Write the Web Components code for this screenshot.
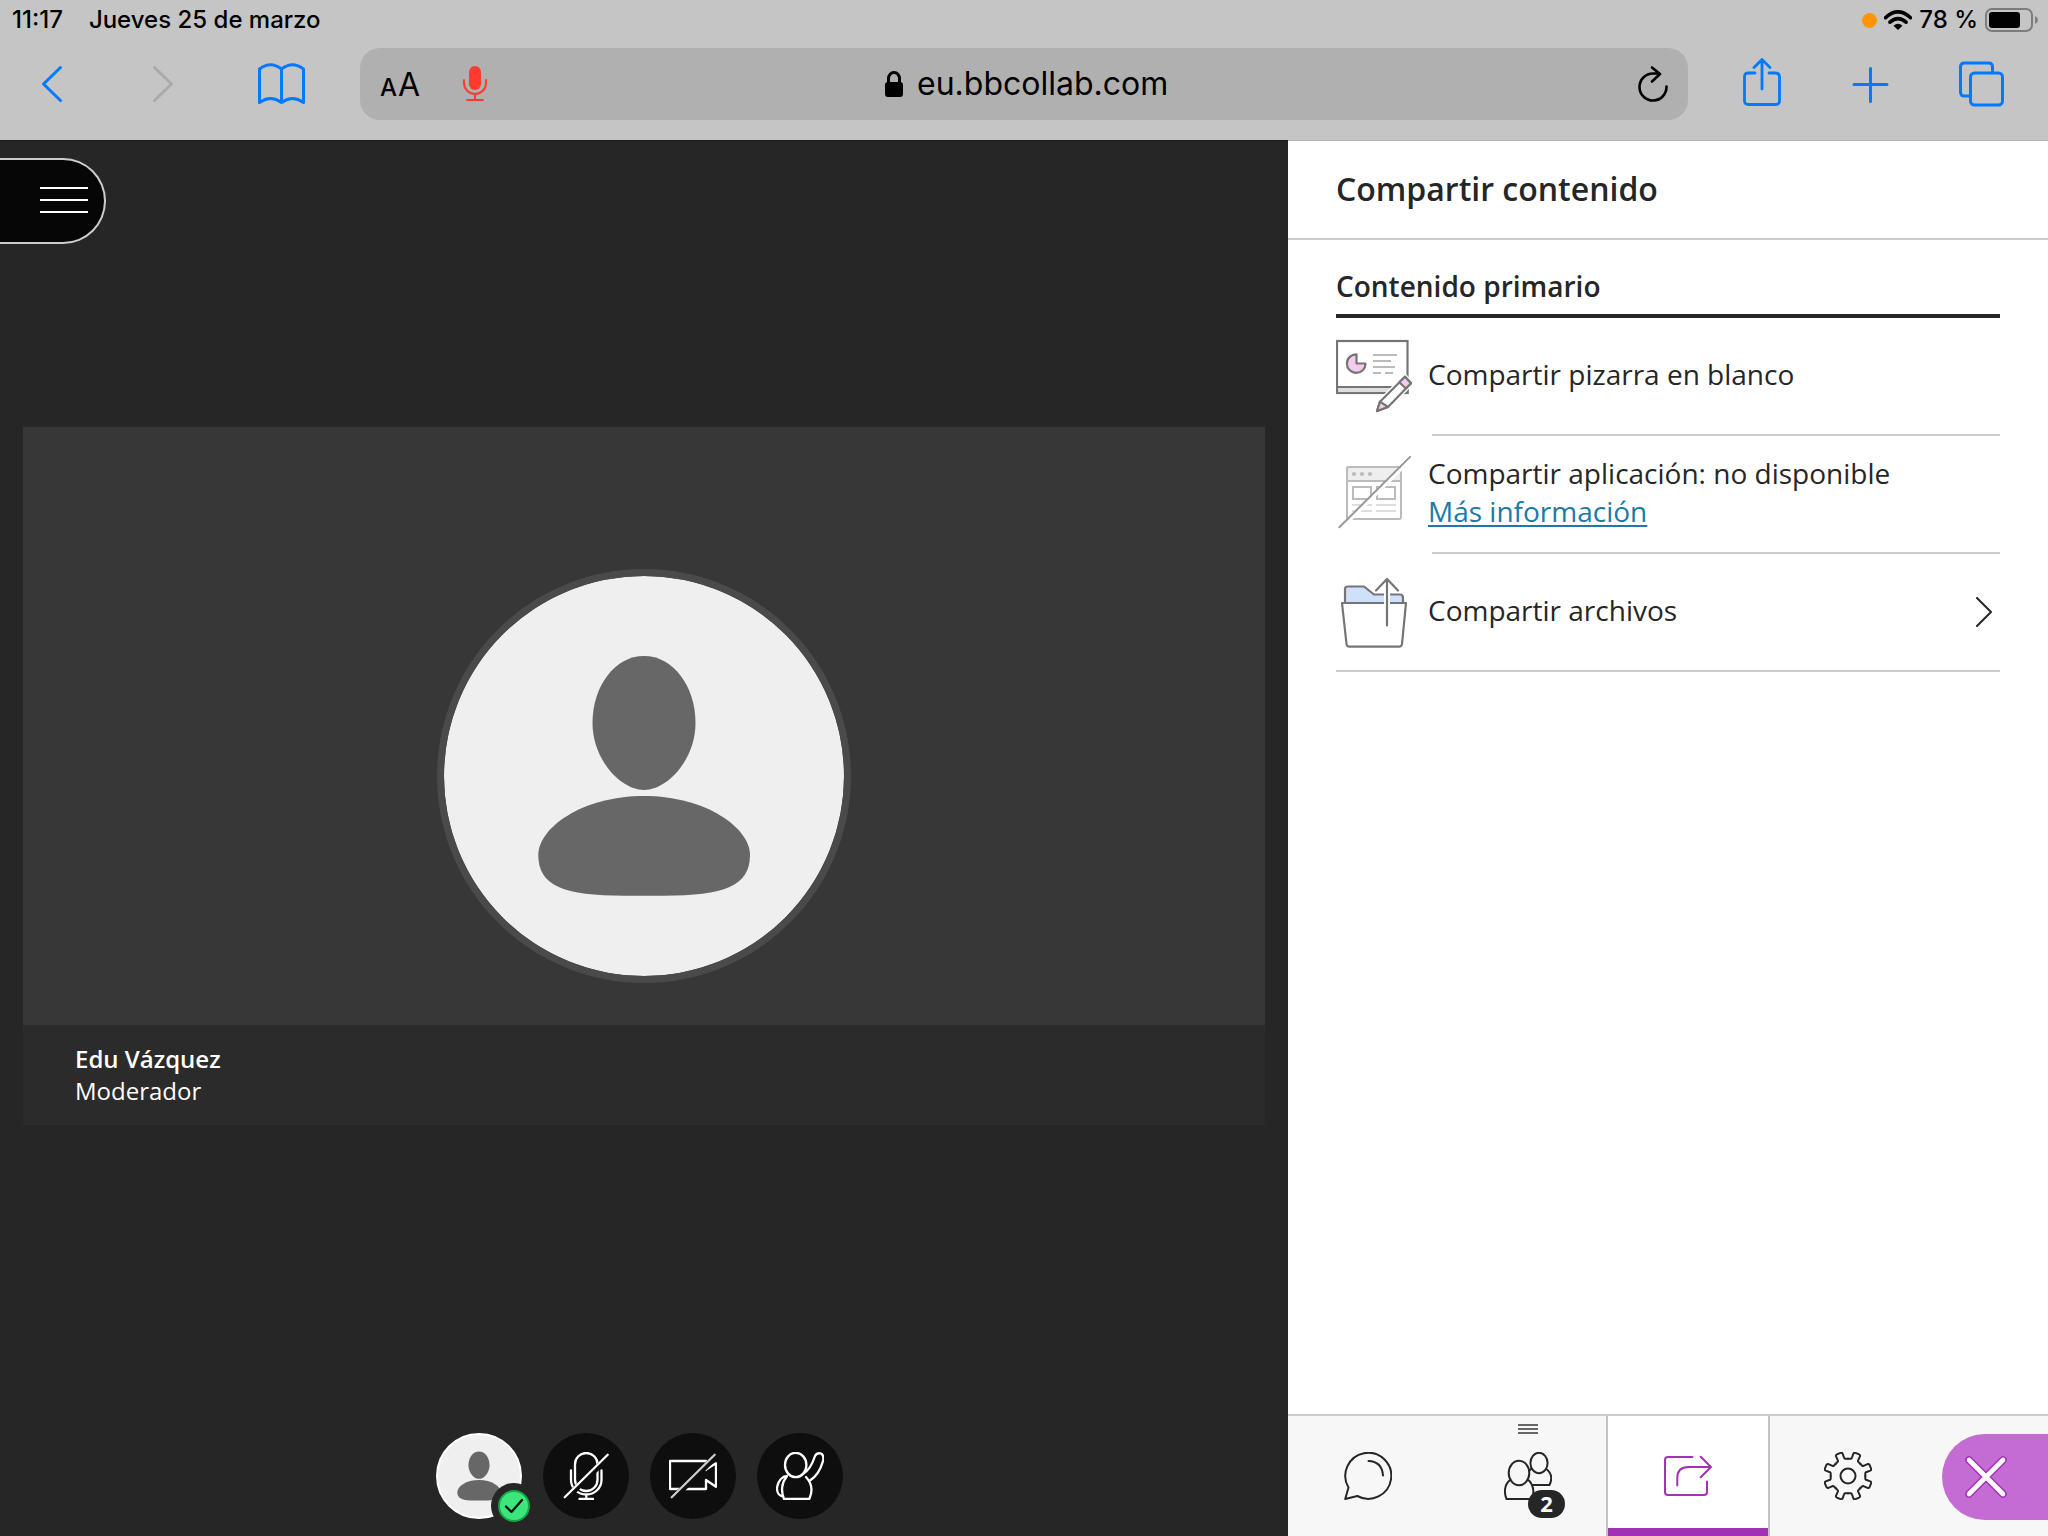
<!DOCTYPE html>
<html lang="es">
<head>
<meta charset="utf-8">
<meta name="viewport" content="width=device-width, initial-scale=1">
<title>Compartir contenido</title>
<style>
  html, body { margin: 0; height: 100%; }
  body { font-family: "Open Sans", "Noto Sans", sans-serif; color: #262626; background: #262626; }
</style>
</head>
<body>
<app-shell>
  <status-bar slot="top"></status-bar>
  <browser-toolbar slot="top"></browser-toolbar>
  <video-stage>
    <video-card>
      <span slot="name">Edu Vázquez</span>
      <span slot="role">Moderador</span>
    </video-card>
    <control-bar slot="controls"></control-bar>
  </video-stage>
  <share-panel>
    <span slot="title">Compartir contenido</span>
    <span slot="section">Contenido primario</span>
    <share-item icon="board" action>Compartir pizarra en blanco</share-item>
    <share-item icon="app">Compartir aplicación: no disponible<more-link slot="more">Más información</more-link></share-item>
    <share-item icon="files" action chevron>Compartir archivos</share-item>
    <tab-bar slot="tabs"></tab-bar>
  </share-panel>
</app-shell>

<script>
const base = `
  :host, *, *::before, *::after { box-sizing: border-box; }
  button { font: inherit; color: inherit; background: none; border: 0; padding: 0; margin: 0; text-align: left; }
  svg { display: block; flex: none; fill: none; stroke-linecap: round; stroke-linejoin: round; }
`;

function define(name, render) {
  customElements.define(name, class extends HTMLElement {
    constructor() {
      super();
      this.attachShadow({ mode: 'open' });
    }
    connectedCallback() {
      this.shadowRoot.innerHTML = render(this);
    }
  });
}

const person = `
  <path fill="#676767" d="M200 80C229 80 251.500 110 251.500 147C251.500 184 223 214 200 214S148.500 184 148.500 147C148.500 110 171 80 200 80Z"/>
  <path fill="#676767" d="M200 220C262 220 306 252 306 279C306 310 280 319.700 220 319.700H180C120 319.700 94.300 310 94.300 279C94.300 252 138 220 200 220Z"/>`;

/* One gear tooth, repeated every 45 degrees round the hub */
const tooth = 'M0-17.300H2.400Q3.500-17.300 3.800-18L5.400-22.300Q6-23.500 7.400-23.100L11.100-21.570Q12.400-21 11.950-19.590L10.040-15.410Q9.800-14.700 10.540-13.930L12.230-12.230';
const gear = Array.from({ length: 8 }, (_, i) => `<path d="${tooth}" transform="rotate(${i * 45})"/>`).join('');

define('app-shell', () => `
  <style>${base}
    :host { display: flex; flex-direction: column; min-height: 100vh; }
    header { position: relative; z-index: 1; background: #c5c5c5; box-shadow: 0 1px 0 rgba(0,0,0,.3); }
    main { flex: 1; display: grid; grid-template-columns: minmax(0, 1fr) 760px; }
  </style>
  <header><slot name="top"></slot></header>
  <main><slot></slot></main>`);

define('status-bar', () => `
  <style>${base}
    :host { display: flex; justify-content: space-between; align-items: center; height: 40px; padding: 0 9px 0 12px;
      font: 500 24px/28px Inter, "Liberation Sans", sans-serif; color: #000; }
    div { display: flex; align-items: center; }
    .left { gap: 26px; }
    .right { gap: 7px; }
    .dot { width: 15px; height: 15px; border-radius: 50%; background: #ff9500; }
  </style>
  <div class="left"><time>11:17</time><span>Jueves 25 de marzo</span></div>
  <div class="right">
    <span class="dot"></span>
    <svg width="28" height="20" viewBox="0 0 28 20" stroke="#000" stroke-width="3.600" stroke-linecap="butt"><path d="M1.500 7.700Q14-4 26.500 7.700M6 12.200Q14 5 22 12.200"/><path d="M9.500 15.700Q14 12 18.500 15.700L14 20Z" fill="#000" stroke="none"/></svg>
    <span>78 %</span>
    <svg width="54" height="24" viewBox="0 0 54 24"><rect x="1" y="1" width="46" height="22" rx="6" stroke="#7d7d7d" stroke-width="2"/><rect x="4" y="4" width="31" height="16" rx="3" fill="#000"/><path d="M50 8Q53 9.500 53 12T50 16Z" fill="#7d7d7d"/></svg>
  </div>`);

define('browser-toolbar', () => `
  <style>${base}
    :host { display: grid; grid-template-columns: 360px minmax(0, 1fr) 360px; align-items: center; padding: 8px 0 20px; color: #000; }
    nav, .history { display: flex; align-items: center; }
    nav { gap: 71px; padding-left: 28px; }
    .history { gap: 63px; }
    nav.actions { gap: 62px; padding-left: 50px; }
    svg { stroke: #007aff; stroke-width: 3; }
    .field { display: grid; grid-template-columns: 1fr auto 1fr; align-items: center; height: 72px; padding: 0 20px;
      border-radius: 20px; background: #b0b0b0; font-family: Inter, "Liberation Sans", sans-serif; }
    .tools, label { display: flex; align-items: center; }
    .tools { gap: 43px; }
    .aa { display: flex; align-items: baseline; gap: 1px; padding-top: 4px; font-size: 32px; line-height: 40px; }
    .aa small { font-size: 24px; font-weight: 500; }
    label { gap: 14px; padding-left: 12px; }
    input { width: 258px; height: 44px; padding: 0; border: 0; background: none; font: 400 32px/44px Inter, "Liberation Sans", sans-serif; color: #000; }
    .reload { justify-self: end; }
  </style>
  <nav aria-label="Navegación">
    <div class="history">
      <button aria-label="Atrás"><svg width="48" height="48" viewBox="0 0 48 48"><path d="M32.500 7.500L15.500 24L32.500 40.500"/></svg></button>
      <button aria-label="Adelante" disabled><svg width="48" height="48" viewBox="0 0 48 48" style="stroke:#aaa"><path d="M15.500 7.500L32.500 24L15.500 40.500"/></svg></button>
    </div>
    <button aria-label="Marcadores"><svg width="48" height="48" viewBox="0 0 48 48"><path d="M23.500 9Q12.500 .500 1.500 9V42.500Q12.500 34.500 23.500 42.500Q34.500 34.500 45.500 42.500V9Q34.500 .500 23.500 9V42.500"/></svg></button>
  </nav>
  <div class="field">
    <div class="tools">
      <button class="aa" aria-label="Formato"><small>A</small><span>A</span></button>
      <button aria-label="Micrófono"><svg width="24" height="36" viewBox="0 0 24 36" style="stroke:#ff3b30;stroke-width:2"><rect x="6" y="0" width="12" height="24" rx="6" fill="#ff3b30" stroke="none"/><path d="M1 14V17A11 11 0 0 0 23 17V14M12 28V34M4 34H20"/></svg></button>
    </div>
    <label>
      <svg width="18" height="26" viewBox="0 0 18 26" style="stroke:#000"><rect y="11" width="18" height="15" rx="3" fill="#000" stroke="none"/><path d="M3.500 13V7.500A5.500 6 0 0 1 14.500 7.500V13"/></svg>
      <input type="text" aria-label="Dirección" value="eu.bbcollab.com">
    </label>
    <button class="reload" aria-label="Recargar"><svg width="30" height="36" viewBox="0 0 30 36" style="stroke:#000;stroke-width:2.600"><path d="M28.500 20.500A13.500 13.500 0 1 1 15 7.500H21.500M14 1.500L22 8L14 15.500"/></svg></button>
  </div>
  <nav class="actions" aria-label="Acciones">
    <button aria-label="Compartir"><svg width="48" height="52" viewBox="0 -2 48 52"><path d="M17 13H10.500Q6.500 13 6.500 17V40.500Q6.500 44.500 10.500 44.500H37.500Q41.500 44.500 41.500 40.500V17Q41.500 13 37.500 13H31M24 29V0M16 7.500L24 -.500L32 7.500" stroke-width="2.800"/></svg></button>
    <button aria-label="Pestaña nueva"><svg width="48" height="48" viewBox="0 0 48 48"><path d="M22.500 8.500V41.500M6 24.500H39"/></svg></button>
    <button aria-label="Pestañas"><svg width="48" height="48" viewBox="0 0 48 48"><path d="M34.500 12.500V7Q34.500 3 30.500 3H6.500Q2.500 3 2.500 7V32Q2.500 36 6.500 36H12" stroke-linecap="butt"/><rect x="12.500" y="13" width="32" height="32" rx="4"/></svg></button>
  </nav>`);

define('video-stage', () => `
  <style>${base}
    :host { position: relative; display: flex; flex-direction: column; background: #262626; }
    .area { flex: 1; display: flex; align-items: center; padding: 0 23px; }
    .menu { position: absolute; left: 0; top: 18px; display: flex; align-items: center; justify-content: flex-end; width: 106px; height: 86px; padding: 0 16px 2px 0;
      border: 2px solid #ccc; border-left: 0; border-radius: 0 43px 43px 0; background: #060606; }
  </style>
  <div class="area"><slot></slot></div>
  <slot name="controls"></slot>
  <button class="menu" aria-label="Menú de la sesión"><svg width="48" height="26" viewBox="0 0 48 26" stroke="#fff" stroke-width="2" stroke-linecap="butt"><path d="M0 1H48M0 13H48M0 25H48"/></svg></button>`);

define('video-card', () => `
  <style>${base}
    :host { flex: 1; display: grid; grid-template-rows: minmax(0, 1fr) 100px; aspect-ratio: 16 / 9; background: #373737; }
    .avatar { grid-area: 1 / 1 / 3 / 2; place-self: center; width: 414px; height: 414px; border: 7px solid #4a4a4a; border-radius: 50%; background: #efefef; background-clip: padding-box; }
    .avatar svg { width: 100%; height: 100%; }
    footer { grid-area: 2 / 1; display: flex; flex-direction: column; justify-content: center; padding: 0 52px; background: #2b2b2b; color: #fff; font-size: 24px; line-height: 32px; }
    strong { font-weight: 600; }
  </style>
  <div class="avatar"><svg viewBox="0 0 400 400">${person}</svg></div>
  <footer><strong><slot name="name"></slot></strong><slot name="role"></slot></footer>`);

define('control-bar', () => `
  <style>${base}
    :host { display: flex; justify-content: center; gap: 21px; height: 124px; padding: 21px 9px 0 0; }
    button { position: relative; display: grid; place-items: center; width: 86px; height: 86px; border-radius: 50%; background: #0e0e0e; }
    .me { border: 2px solid #fff; background: #efefef; }
    .me .badge { position: absolute; right: -17px; bottom: -12px; }
    svg.icon { stroke: #fff; stroke-width: 2.300; }
    .gap { stroke: #0e0e0e; stroke-width: 6; }
  </style>
  <button class="me" aria-label="Mi estado">
    <svg width="82" height="82" viewBox="0 0 400 400">${person}</svg>
    <svg class="badge" width="46" height="46" viewBox="0 0 46 46"><circle cx="23" cy="23" r="23" fill="#262626"/><circle cx="23" cy="23" r="15" fill="#3de67b" stroke="#16a544" stroke-width="2"/><path d="M15 23.500L20.500 29L31 17" stroke="#000" stroke-width="2.200"/></svg>
  </button>
  <button aria-label="Activar micrófono"><svg class="icon" width="48" height="48" viewBox="0 0 48 48"><rect x="13" y="1" width="22.500" height="38" rx="11.250"/><path d="M9 18.500V28A15.250 14.500 0 0 0 39.500 28V18.500M24.300 42.500V47M17.500 47H31"/><path class="gap" d="M4 46.500L47 4"/><path d="M2.700 45.300L45.700 2.700"/></svg></button>
  <button aria-label="Activar cámara"><svg class="icon" width="48" height="48" viewBox="0 0 48 48"><path d="M37 18V9H1V37H37V28L47 34.700V11.300L37 17.500"/><path class="gap" d="M4 46.500L47 4"/><path d="M2.700 45.300L45.700 2.700" stroke="#ccc"/></svg></button>
  <button aria-label="Levantar la mano"><svg class="icon" width="48" height="48" viewBox="0 0 48 48"><ellipse cx="19.700" cy="13" rx="10.700" ry="12.200"/><path d="M10.500 25C6 30 4.500 39 8 47H33.300C37 39 35.500 31 30 25M11 24C1 25 -3 42 6.500 44.500M27.500 21.500C34 18 37 10 39 4Q41 .500 45 1.500Q48.500 3.500 47 9C45 16 41 24 34 28.500"/></svg></button>`);

define('share-panel', () => `
  <style>${base}
    :host { display: flex; flex-direction: column; background: #fff; }
    h1 { display: flex; align-items: center; height: 100px; margin: 0; padding: 0 48px; border-bottom: 2px solid #ccc; font-size: 32px; line-height: 44px; font-weight: 600; }
    section { flex: 1; padding: 0 48px; }
    h2 { margin: 0; padding: 27px 0 9px; border-bottom: 4px solid #262626; font-size: 28px; line-height: 38px; font-weight: 600; }
  </style>
  <h1><slot name="title"></slot></h1>
  <section><h2><slot name="section"></slot></h2><slot></slot></section>
  <slot name="tabs"></slot>`);

const itemIcons = {
  board: `<g stroke="#757575" stroke-width="2.200"><rect x="1" y="3" width="70.500" height="52" fill="#fff" stroke-linejoin="miter"/><path d="M1 49H71.500V55H1Z" fill="#ddd" stroke-linejoin="miter"/><path d="M20.500 16.300A9.300 9.300 0 1 0 29.500 25.500H20.500Z" fill="#f3ccec"/></g>
    <path d="M37 17H61M37 23H55M37 29H59M37 35H45M49 35H57" stroke="#bbb" stroke-width="2" stroke-linecap="butt"/>
    <path d="M69 38.700L75 45.300L52 69L41 73L44 63.700Z" fill="#fff" stroke="#fff" stroke-width="5"/>
    <g stroke="#757575" stroke-width="2.200"><path d="M69 38.700L75 45.300L52 69L41 73L44 63.700Z" fill="#fff"/><path d="M69 38.700L75 45.300L69.800 50.500L63.300 44.200Z" fill="#f3ccec"/><path d="M44 63.700L52 69L41 73Z" fill="#f3ccec"/></g>`,
  app: `<g stroke="#bbb" stroke-width="2"><rect x="11" y="11" width="54" height="52" rx="2"/><path d="M11 25V13Q11 11 13 11H63Q65 11 65 13V25Z" fill="#eee"/><g stroke-linejoin="miter"><rect x="17" y="31" width="18" height="12"/><rect x="41" y="31" width="18" height="12"/></g></g>
    <g fill="#bbb"><circle cx="18" cy="18" r="2"/><circle cx="26" cy="18" r="2"/><circle cx="34" cy="18" r="2"/></g>
    <path d="M16 49H36M40 49H60M16 55H36M40 55H60" stroke="#ddd" stroke-width="2" stroke-linecap="butt"/>
    <path d="M5 73L76 2.500" stroke="#fff" stroke-width="3"/><path d="M3.300 71.300L74 .900" stroke="#999" stroke-width="2"/>`,
  files: `<g stroke="#757575" stroke-width="2.200"><path d="M9 29V15Q9 12.500 12 12.500H28L38 20.500H64Q67 20.500 67 24V29Z" fill="#cfe1f9"/><path d="M6 29H70L66 70Q65.700 72.700 63 72.700H13.500Q10.800 72.700 10.500 70Z" fill="#fff"/></g>
    <path d="M51 6V52" stroke="#fff" stroke-width="6" stroke-linecap="butt"/>
    <path d="M51 5V51.500M40 16.500L51 5L62 16.500" stroke="#757575" stroke-width="2.200"/>`
};

define('share-item', (el) => {
  const tag = el.hasAttribute('action') ? 'button' : 'div';
  return `
  <style>${base}
    :host { display: block; font-size: 28px; line-height: 38px; }
    .row { display: flex; align-items: center; gap: 16px; width: 100%; height: 116px; }
    .text { flex: 1; padding-bottom: 4px; }
    .chevron { margin-right: 8px; }
    hr { height: 2px; margin: 0 0 0 96px; border: 0; background: #ccc; }
    :host([chevron]) hr { margin-left: 0; }
  </style>
  <${tag} class="row">
    <svg width="76" height="76" viewBox="0 0 76 76">${itemIcons[el.getAttribute('icon')]}</svg>
    <span class="text"><slot></slot><slot name="more"></slot></span>
    ${el.hasAttribute('chevron') ? '<svg class="chevron" width="16" height="30" viewBox="0 0 16 30" stroke="#262626" stroke-width="2"><path d="M1 1L15 15L1 29"/></svg>' : ''}
  </${tag}>
  <hr>`;
});

define('more-link', () => `
  <style>
    :host { display: block; }
    a { color: #1a7aa8; text-decoration: underline; text-decoration-thickness: 2px; text-underline-offset: 3px; text-decoration-skip-ink: none; }
  </style>
  <a href="#"><slot></slot></a>`);

define('tab-bar', () => `
  <style>${base}
    :host { display: flex; height: 122px; border-top: 2px solid #ccc; background: #f7f7f7; overflow: hidden; }
    button { position: relative; display: grid; place-items: center; width: 160px; height: 120px; }
    svg.icon { stroke: #262626; stroke-width: 2; }
    .active { background: #fff; box-shadow: -2px 0 #c4c4c4, 2px 0 #c4c4c4, inset 0 -8px #a232b5; }
    .active svg.icon { stroke: #a232b5; }
    .grip { position: absolute; left: 70px; top: 8px; }
    .count { position: absolute; left: 80px; top: 74px; width: 37px; height: 28px; border-radius: 14px; background: #262626; color: #fff; font-size: 22px; line-height: 26px; font-weight: 700; text-align: center; }
    .close { width: 106px; height: 86px; margin: 18px 0 0 auto; border-radius: 43px 0 0 43px; background: #c56cd4; }
    .close svg { margin-right: 18px; }
  </style>
  <button aria-label="Chat"><svg class="icon" width="48" height="48" viewBox="0 0 48 48"><path d="M4.500 35.500A23 23 0 1 1 13.300 44L1.200 47Z"/><path d="M24.500 9Q38 9.500 39 23.500"/></svg></button>
  <button aria-label="Asistentes">
    <svg class="grip" width="20" height="10" viewBox="0 0 20 10" stroke="#666" stroke-width="2" stroke-linecap="butt"><path d="M0 1H20M0 5H20M0 9H20"/></svg>
    <svg class="icon" width="48" height="48" viewBox="0 0 48 48"><ellipse cx="15" cy="21" rx="10.300" ry="12.200"/><ellipse cx="35" cy="11" rx="8.600" ry="10.200"/><path d="M6 28C0 33 0 41 2.500 47H28C30.500 40 29 33 25 28.500M43 17.500C48 22 48 28 45.500 33H28.500M25.500 18.500L27.500 16.500"/></svg>
    <span class="count">2</span>
  </button>
  <button class="active" aria-label="Compartir contenido"><svg class="icon" width="48" height="48" viewBox="0 0 48 48"><path d="M28.500 5H4Q1 5 1 8V40Q1 43 4 43H40Q43 43 43 40V29.500M13.300 33.500V26Q13.300 15 24.500 15H47M36.700 4.700L47 15L36.700 25.300"/></svg></button>
  <button aria-label="Mis ajustes"><svg class="icon" width="48" height="48" viewBox="-24 -24 48 48">${gear}<circle r="7.500"/></svg></button>
  <button class="close" aria-label="Cerrar panel"><svg width="44" height="44" viewBox="0 0 44 44"><path d="M5 5L39 39M39 5L5 39" stroke="#a232b5" stroke-width="7.600"/><path d="M5 5L39 39M39 5L5 39" stroke="#fff" stroke-width="4.600"/></svg></button>`);
</script>
</body>
</html>
